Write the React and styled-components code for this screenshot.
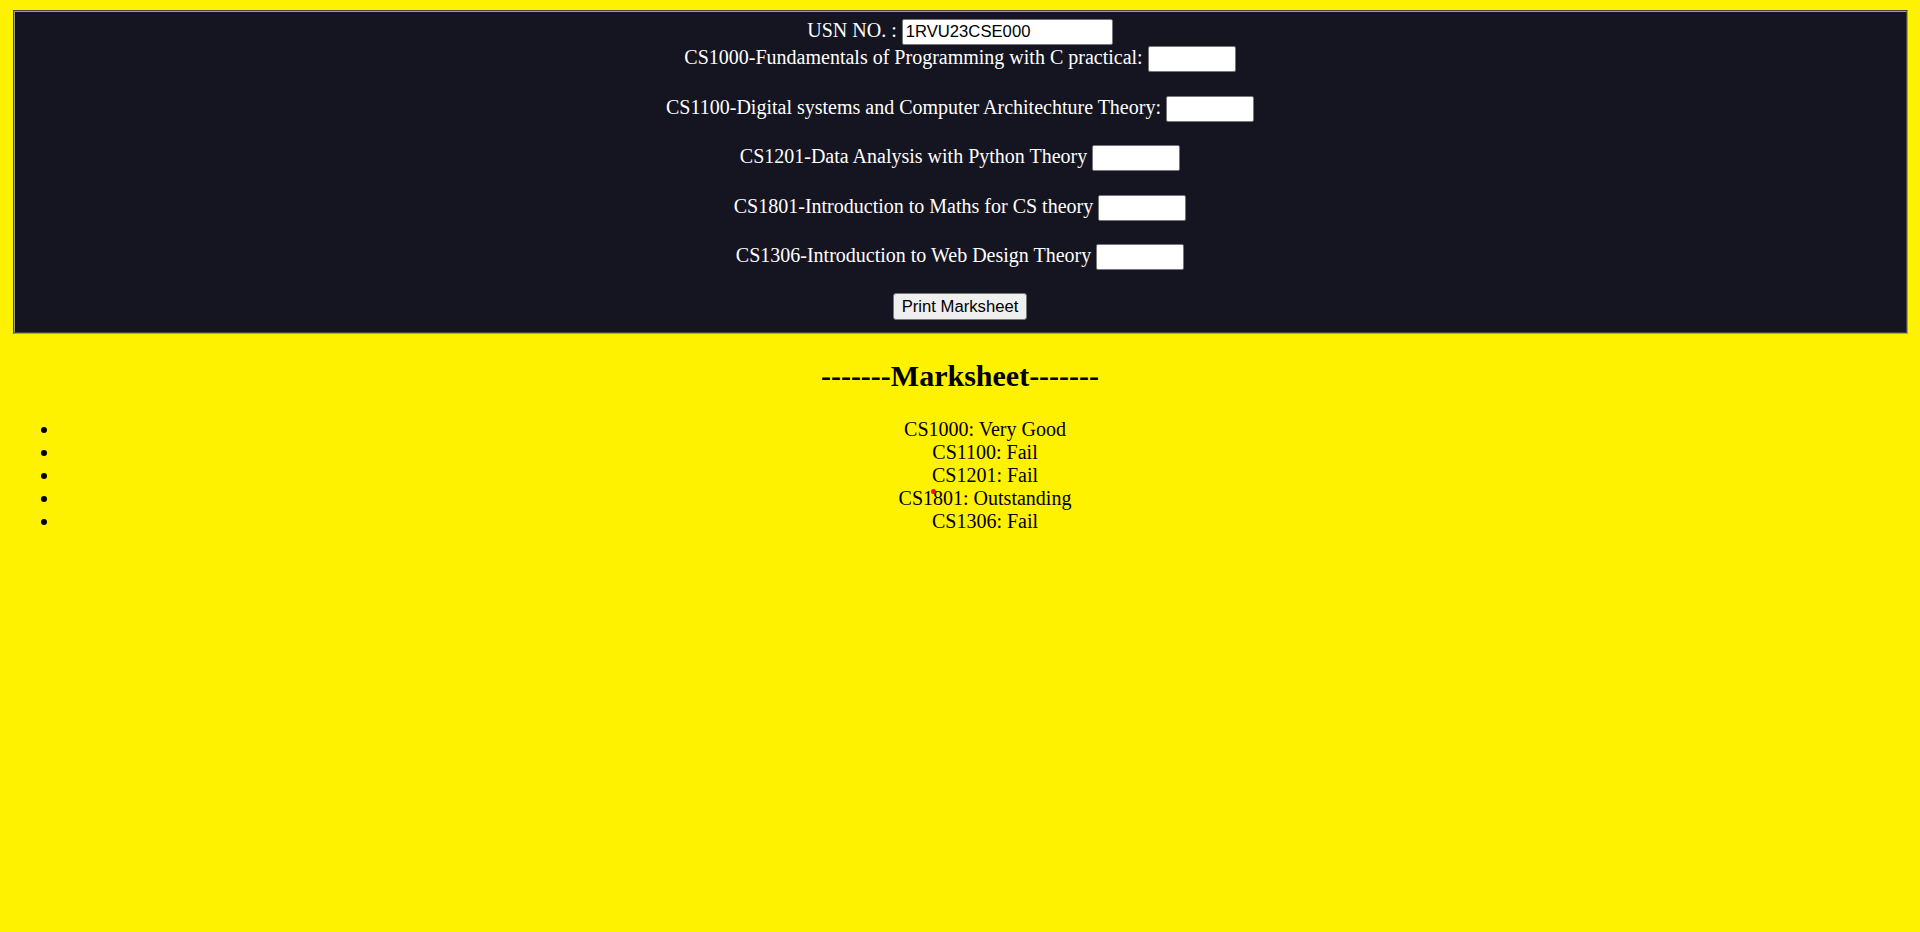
import React from "react";
import styled, { createGlobalStyle } from "styled-components";

const GlobalStyle = createGlobalStyle`
  html, body {
    margin: 0;
    padding: 0;
  }
  body {
    background: #fff200;
    margin: 10px;
    font-family: "Liberation Serif", "Times New Roman", serif;
    font-size: 20px;
    color: #000;
    min-height: 912px;
  }
`;

const Page = styled.div`
  position: relative;
`;

/**
 * Dark input panel at the top of the page
 */
const Panel = styled.fieldset`
  margin: 0 2.5px;
  padding: 7px 15px 12.5px;
  border: 2.5px groove #9a9a9a;
  background: #151521;
  color: #fff;
  min-width: 0;
`;

const Row = styled.div`
  display: flex;
  justify-content: center;
  align-items: baseline;
  gap: 5px;
  height: 26px;
  margin-top: ${props => props.$gap || 0}px;
  line-height: 23px;
`;

const Field = styled.input`
  box-sizing: border-box;
  width: ${props => props.$width}px;
  height: 26px;
  padding: 1px 3px;
  border: 1px solid #767676;
  border-radius: 2px;
  background: #fff;
  color: #000;
  font-family: "Liberation Sans", Arial, sans-serif;
  font-size: 16.67px;
  outline: none;
`;

const PrintButton = styled.button`
  box-sizing: border-box;
  height: 27px;
  padding: 1px 8px;
  border: 1px solid #767676;
  border-radius: 3px;
  background: #efefef;
  color: #000;
  font-family: "Liberation Sans", Arial, sans-serif;
  font-size: 16.67px;
  cursor: pointer;
`;

const Heading = styled.h2`
  margin: 25px 0 25px;
  text-align: center;
  font-size: 30px;
  font-weight: bold;
  line-height: 34.5px;
`;

const List = styled.ul`
  margin: 0;
  padding-left: 50px;
  list-style: disc;
  text-align: center;
  line-height: 23px;
`;

const Item = styled.li``;

const CursorDot = styled.span`
  position: absolute;
  left: 921px;
  top: 479px;
  width: 5px;
  height: 5px;
  border-radius: 50%;
  background: #e8141c;
`;

const subjects = [
  { label: "CS1000-Fundamentals of Programming with C practical:", gap: 1 },
  { label: "CS1100-Digital systems and Computer Architechture Theory:", gap: 23.5 },
  { label: "CS1201-Data Analysis with Python Theory", gap: 23.5 },
  { label: "CS1801-Introduction to Maths for CS theory", gap: 23.5 },
  { label: "CS1306-Introduction to Web Design Theory", gap: 23.5 }
];

const results = [
  "CS1000: Very Good",
  "CS1100: Fail",
  "CS1201: Fail",
  "CS1801: Outstanding",
  "CS1306: Fail"
];

const App = () => (
  <Page>
    <GlobalStyle />
    <Panel>
      <Row>
        <span>USN NO. :</span>
        <Field $width={211} defaultValue="1RVU23CSE000" />
      </Row>
      {subjects.map(s => (
        <Row key={s.label} $gap={s.gap}>
          <span>{s.label}</span>
          <Field $width={88} />
        </Row>
      ))}
      <Row $gap={23}>
        <PrintButton>Print Marksheet</PrintButton>
      </Row>
    </Panel>
    <Heading>-------Marksheet-------</Heading>
    <List>
      {results.map(r => (
        <Item key={r}>{r}</Item>
      ))}
    </List>
    <CursorDot />
  </Page>
);

export default App;
